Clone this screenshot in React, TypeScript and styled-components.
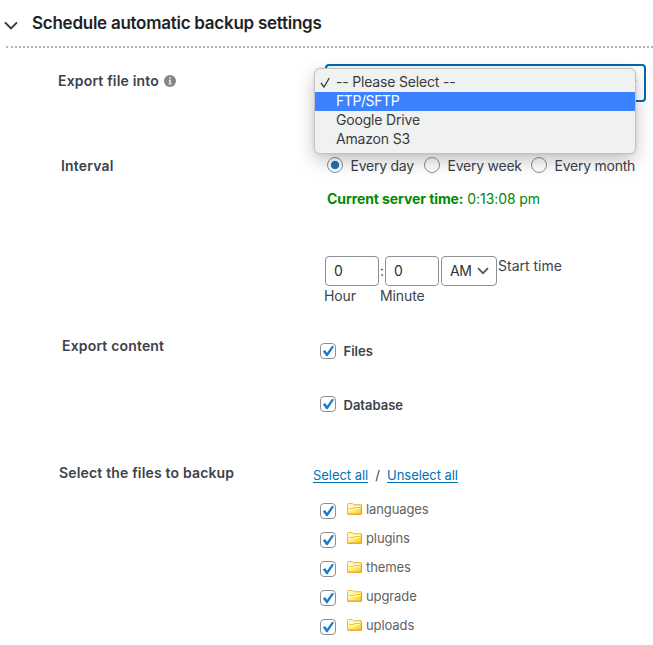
import React from "react";
import styled, { createGlobalStyle, css } from "styled-components";

const GlobalStyle = createGlobalStyle`
  *, *::before, *::after { box-sizing: border-box; }
  body {
    margin: 0;
    background: #fff;
    color: #3c434a;
    font: 14px/20px Inter, "Liberation Sans", sans-serif;
  }
`;

const Page = styled.main`
  width: 653px;
  height: 645px;
  overflow: hidden;
  background: #fff;
`;

const Header = styled.header`
  display: flex;
  align-items: flex-start;
  height: 48px;
  margin-left: 6px;
  padding-top: 12px;
  border-bottom: 2px dotted #b4b4b4;
`;

const HeaderArrow = styled.svg`
  flex: none;
  width: 16px;
  height: 12px;
  margin: 8px 12px 0 -2px;
`;

const Title = styled.h2`
  margin: 0;
  font-size: 17px;
  line-height: 22px;
  font-weight: 600;
  letter-spacing: -0.26px;
  color: #1d2327;
  white-space: nowrap;
`;

const Row = styled.section<{ $height: number }>`
  display: grid;
  grid-template-columns: 312px 1fr;
  height: ${(p) => p.$height}px;
`;

const Label = styled.div<{ $left: number; $top?: number }>`
  display: flex;
  align-items: center;
  height: 20px;
  margin-top: ${(p) => p.$top ?? 0}px;
  padding-left: ${(p) => p.$left}px;
  font-weight: 600;
  letter-spacing: 0.17px;
  white-space: nowrap;
`;

const InfoIcon = styled.svg`
  width: 12px;
  height: 12px;
  margin-left: 5px;
`;

const SelectWrap = styled.div`
  position: relative;
  margin: 16px 0 0 13px;
  width: 321px;
  height: 38px;
`;

const SelectBox = styled.div`
  display: flex;
  align-items: center;
  justify-content: flex-end;
  height: 38px;
  padding-right: 7px;
  border: 2px solid #0069b0;
  border-radius: 4px;
  background: #fff;
`;

const Menu = styled.ul`
  position: absolute;
  z-index: 2;
  left: -11px;
  top: 4px;
  width: 322px;
  height: 86px;
  margin: 0;
  padding: 4px 0;
  list-style: none;
  border: 1px solid #c3c3c3;
  border-radius: 6px;
  background: #f0f1f1;
  box-shadow: 0 7px 18px rgba(0, 0, 0, 0.23), 0 0 3px rgba(0, 0, 0, 0.1);
`;

const Option = styled.li<{ $active?: boolean }>`
  display: grid;
  grid-template-columns: 21px 1fr;
  align-items: center;
  height: 19px;
  line-height: 17px;
  padding-bottom: 2px;
  letter-spacing: ${(p) => (p.$active ? -0.42 : -0.18)}px;
  color: ${(p) => (p.$active ? "#fff" : "#3b3b3b")};
  background: ${(p) => (p.$active ? "#3c82fe" : "transparent")};
`;

const Tick = styled.svg`
  width: 11px;
  height: 11px;
  margin: 2px 0 0 5px;
`;

const RadioGroup = styled.div`
  display: grid;
  grid-template-columns: 97px 107px 1fr;
  height: 20px;
  padding-left: 15px;
`;

const RadioOption = styled.label`
  display: flex;
  gap: 7.5px;
  white-space: nowrap;
  letter-spacing: -0.24px;
`;

const Radio = styled.span<{ $checked?: boolean }>`
  flex: none;
  width: 16px;
  height: 16px;
  margin-top: 1px;
  border: 1px solid #8c8f94;
  border-radius: 50%;
  ${(p) =>
    p.$checked &&
    css`
      background: radial-gradient(circle, #1e75bd 0 3.7px, #fff 4.6px);
    `}
`;

const ServerTime = styled.p`
  margin: 13px 0 0 15px;
  color: #008a00;
  white-space: nowrap;
  letter-spacing: -0.08px;
`;

const TimeFields = styled.div`
  display: flex;
  height: 30px;
  margin: 47px 0 0 13px;
`;

const box = css`
  display: flex;
  align-items: center;
  height: 30px;
  padding-left: 8px;
  border: 1px solid #8c8f94;
  border-radius: 4px;
  color: #2c3338;
`;

const TimeInput = styled.div`
  ${box}
  width: 54px;
`;

const Colon = styled.span`
  width: 6px;
  padding: 5px 0 0 1px;
`;

const PeriodSelect = styled.div`
  ${box}
  justify-content: space-between;
  width: 56px;
  margin-left: 2px;
  padding: 0 7px 0 8px;
  letter-spacing: -0.3px;
`;

const StartTime = styled.span`
  margin-left: 1px;
  white-space: nowrap;
`;

const TimeCaptions = styled.div`
  display: grid;
  grid-template-columns: 56px 1fr;
  margin-left: 12px;
  letter-spacing: -0.1px;
`;

const CheckGroup = styled.div`
  padding-top: 7px;
`;

const CheckOption = styled.label<{ $gap: number }>`
  display: flex;
  align-items: flex-start;
  height: 20px;
  margin: 0 0 ${(p) => p.$gap}px 8px;
  font-size: 13px;
  font-weight: 600;
`;

const CheckBox = styled.span`
  display: flex;
  flex: none;
  width: 16px;
  height: 16px;
  border: 1px solid #8c8f94;
  border-radius: 4px;
  background: #fff;
`;

const CheckText = styled.span<{ $raised?: boolean }>`
  margin: ${(p) => (p.$raised ? -2 : -1)}px 0 0 7.5px;
`;

const Files = styled.div`
  padding-top: 2px;
`;

const Links = styled.div`
  display: flex;
  height: 20px;
  padding-left: 1px;
  font-size: 13px;
  white-space: nowrap;
`;

const Link = styled.a`
  color: #0071b5;
  letter-spacing: -0.05px;
  text-decoration: underline;
  text-underline-offset: 2px;
`;

const Slash = styled.span`
  width: 19px;
  text-align: center;
`;

const FileList = styled.ul`
  margin: 18px 0 0;
  padding: 0 0 0 8px;
  list-style: none;
`;

const FileItem = styled.li`
  display: flex;
  height: 29px;
  color: #626262;
  font-size: 13px;
  letter-spacing: -0.1px;
`;

const FolderIcon = styled.svg`
  flex: none;
  width: 15px;
  height: 12px;
  margin: 0 4px 0 11px;
`;

const FileName = styled.span`
  margin-top: -4px;
`;

const Chevron = () => (
  <svg width="12" height="8" viewBox="0 0 12 8" fill="none">
    <path d="M1 1.2 6 6.2 11 1.2" stroke="#50575e" strokeWidth="1.8" />
  </svg>
);

const Checked = () => (
  <CheckBox>
    <svg width="14" height="14" viewBox="0 0 14 14">
      <path d="M1.9 7.4 4 6.1l2.1 2.6L11 1.7l2 1.1-6.4 9.4H5.4Z" fill="#1e7bc8" />
    </svg>
  </CheckBox>
);

const Folder = () => (
  <FolderIcon viewBox="0 0 15 12">
    <defs>
      <linearGradient id="folderFace" x1="0" y1="0" x2="1" y2="1">
        <stop offset="0" stopColor="#fffbd2" />
        <stop offset=".5" stopColor="#fff08a" />
        <stop offset="1" stopColor="#fbc800" />
      </linearGradient>
    </defs>
    <path d="M.5 11V1.5q0-1 1-1h4l1.2 1.2h7.6V11Z" fill="url(#folderFace)" stroke="#edb93a" />
    <path d="M1.3 3h4.2v1.4H1.3zM7 3h6.2v1.3H7z" fill="#fffbe0" />
    <path d="M2.5 5.5h4l1-1h5.5" fill="none" stroke="#efbc28" strokeWidth=".9" />
    <path d="M1.5 6.7h5.6l1-1h5" fill="none" stroke="#fff9c7" strokeWidth=".9" />
    <path d="M.5 11.3h14V3" fill="none" stroke="#e29a22" strokeWidth=".9" />
  </FolderIcon>
);

const files = ["languages", "plugins", "themes", "upgrade", "uploads"];

export default function App() {
  return (
    <Page>
      <GlobalStyle />
      <Header>
        <HeaderArrow viewBox="0 0 16 12" fill="none">
          <path d="m1 2.3 6 6 6-6" stroke="#32373c" strokeWidth="1.9" />
        </HeaderArrow>
        <Title>Schedule automatic backup settings</Title>
      </Header>

      <Row $height={108}>
        <Label $left={58} $top={23}>
          Export file into
          <InfoIcon viewBox="0 0 12 12">
            <circle cx="6" cy="6" r="6" fill="#858585" />
            <path d="M5 2.2h2v1.6H5zM4.4 4.8H7v3.8h.7v1H4.4v-1h.7V5.7h-.7z" fill="#dedede" />
          </InfoIcon>
        </Label>
        <SelectWrap>
          <SelectBox>
            <Chevron />
          </SelectBox>
          <Menu>
            <Option>
              <Tick viewBox="0 0 11 11" fill="none">
                <path d="m1 6 3 4L9.3 1" stroke="#3b3b3b" strokeWidth="1.3" />
              </Tick>
              -- Please Select --
            </Option>
            <Option $active><span />FTP/SFTP</Option>
            <Option><span />Google Drive</Option>
            <Option><span />Amazon S3</Option>
          </Menu>
        </SelectWrap>
      </Row>

      <Row $height={180}>
        <Label $left={61}>Interval</Label>
        <div>
          <RadioGroup>
            <RadioOption><Radio $checked />Every day</RadioOption>
            <RadioOption><Radio />Every week</RadioOption>
            <RadioOption><Radio />Every month</RadioOption>
          </RadioGroup>
          <ServerTime><b>Current server time:</b> 0:13:08 pm</ServerTime>
          <TimeFields>
            <TimeInput>0</TimeInput>
            <Colon>:</Colon>
            <TimeInput>0</TimeInput>
            <PeriodSelect>AM<Chevron /></PeriodSelect>
            <StartTime>Start time</StartTime>
          </TimeFields>
          <TimeCaptions><span>Hour</span><span>Minute</span></TimeCaptions>
        </div>
      </Row>

      <Row $height={127}>
        <Label $left={62}>Export content</Label>
        <CheckGroup>
          <CheckOption $gap={33}><Checked /><CheckText $raised>Files</CheckText></CheckOption>
          <CheckOption $gap={0}><Checked /><CheckText>Database</CheckText></CheckOption>
        </CheckGroup>
      </Row>

      <Row $height={182}>
        <Label $left={59}>Select the files to backup</Label>
        <Files>
          <Links>
            <Link>Select all</Link><Slash>/</Slash><Link>Unselect all</Link>
          </Links>
          <FileList>
            {files.map((name) => (
              <FileItem key={name}><Checked /><Folder /><FileName>{name}</FileName></FileItem>
            ))}
          </FileList>
        </Files>
      </Row>
    </Page>
  );
}
